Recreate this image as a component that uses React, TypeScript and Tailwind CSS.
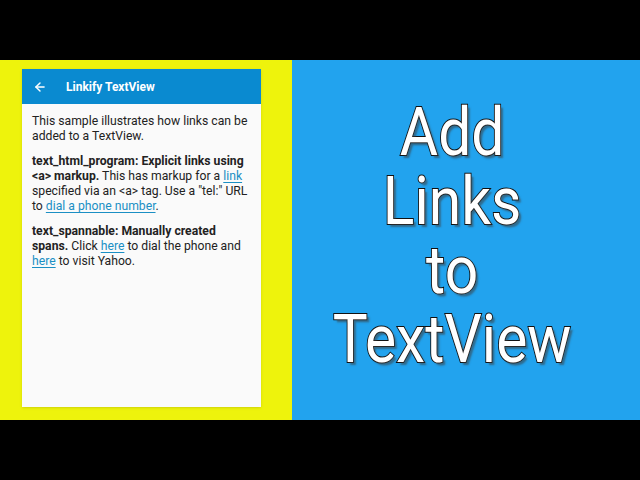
import { ArrowLeft } from "lucide-react"

const big =
  "text-[66px] leading-[69px] text-white [-webkit-text-stroke:2px_#111] [paint-order:stroke_fill] [text-shadow:3px_3px_2px_rgba(60,60,60,0.55)]"

function Link({ children }: { children: React.ReactNode }) {
  return <span className="text-[#1b8fc4] underline underline-offset-2">{children}</span>
}

function Phone() {
  return (
    <div className="flex h-[338px] w-[239px] flex-col bg-[#fafafa] shadow-sm">
      <div className="flex h-[35px] items-center bg-[#0a8ad0] text-white">
        <ArrowLeft className="ml-[11px] size-[14px]" strokeWidth={2.5} />
        <span className="ml-[19px] text-[12px] font-bold">Linkify TextView</span>
      </div>
      <div className="flex flex-col gap-[10px] px-[10px] pt-[10px] text-[12.2px] leading-[15px] text-[#222]">
        <p>This sample illustrates how links can be added to a TextView.</p>
        <p>
          <b>text_html_program: Explicit links using &lt;a&gt; markup.</b> This has markup for a{" "}
          <Link>link</Link> specified via an &lt;a&gt; tag. Use a "tel:" URL to{" "}
          <Link>dial a phone number</Link>.
        </p>
        <p>
          <b>text_spannable: Manually created spans.</b> Click <Link>here</Link> to dial the
          phone and <Link>here</Link> to visit Yahoo.
        </p>
      </div>
    </div>
  )
}

export default function App() {
  return (
    <div className="flex h-[480px] w-[640px] flex-col bg-black font-[Roboto,'Liberation_Sans',sans-serif]">
      <div className="h-[60px]" />
      <div className="flex h-[360px]">
        <div className="w-[292px] bg-[#eef30c] pl-[22px] pt-[9px]">
          <Phone />
        </div>
        <div className="flex flex-1 flex-col items-center bg-[#22a3ee] pr-[28px] pt-[38px]">
          <div className="flex scale-x-[0.89] flex-col items-center">
            <div className={big}>Add</div>
            <div className={big}>Links</div>
            <div className={big}>to</div>
            <div className={big}>TextView</div>
          </div>
        </div>
      </div>
    </div>
  )
}
